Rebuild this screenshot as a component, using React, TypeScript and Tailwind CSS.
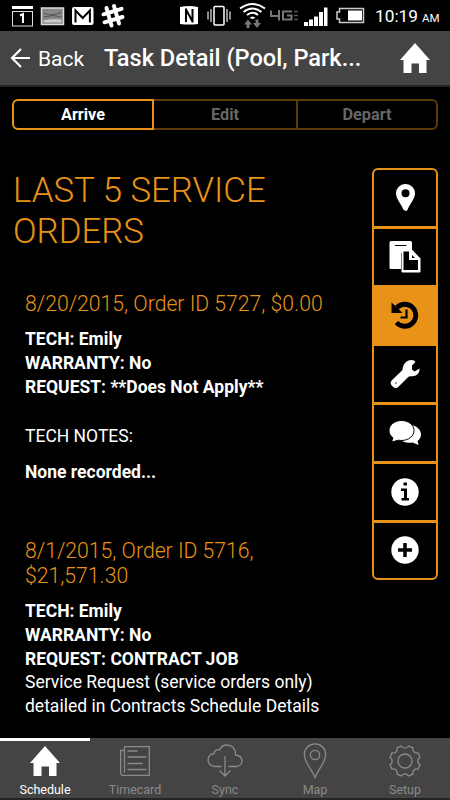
import type { ReactNode } from "react";

const HOUSE = "M15 0 30 17H26.5V30H19V20.5H11.5V30H3.5V17H0Z";

function HomeIcon() {
  return (
    <svg width="30" height="30" viewBox="0 0 30 30" fill="currentColor">
      <path d={HOUSE} />
    </svg>
  );
}

function StatusBar() {
  return (
    <div className="flex h-[31px] shrink-0 items-center bg-black text-white">
      <svg width="370" height="31" viewBox="0 0 370 31" fill="none" className="shrink-0">
        {/* calendar */}
        <path d="M12 7.500h21" stroke="#fff" strokeWidth="3" />
        <rect x="12.500" y="11.500" width="20" height="14.500" stroke="#ddd" />
        <path d="M20 15.500l3-1.500v9" stroke="#fff" strokeWidth="2" />
        {/* gallery */}
        <rect x="41.500" y="8" width="22" height="16.500" fill="#888" stroke="#ddd" strokeWidth="1.500" />
        <path d="M43.500 13q8 4 18-1M43.500 17q10-3 18 0" stroke="#555" />
        <path d="M43.500 20.500q8-2 18-1v3h-18z" fill="#ccc" />
        {/* mail */}
        <rect x="72" y="7" width="21.500" height="18" rx="2" fill="#fff" />
        <path d="M75.500 22.500V10.500l7.200 7.500 7.200-7.500v12" stroke="#000" strokeWidth="2" />
        {/* hash */}
        <path d="M106.500 8l5 17.500M114 6l5 17.500M103.500 14.300l18-5.500M104.500 22.300l18-5.300" stroke="#fff" strokeWidth="4" strokeLinecap="round" />
        {/* nfc */}
        <path d="M180 7q9-2 18 0v17q-9 1-18 0z" fill="#fff" />
        <path d="M186 22V8.500M186 9.500l6.500 12M192.500 22.500V9" stroke="#000" strokeWidth="2" />
        {/* vibrate */}
        <rect x="214" y="6.500" width="10" height="18.500" rx="1" stroke="#fff" strokeWidth="1.500" />
        <path d="M211 9v13M208 11.500v8M227 9v13M230 11.500v8" stroke="#bbb" strokeWidth="1.500" />
        {/* wifi */}
        <path d="M240 8.500q12.500-9 25 0M243.500 12q9-7 18 0M247 15q5.500-4.500 11 0" stroke="#fff" strokeWidth="2" />
        <path d="M249.500 18q3-3 6 0l-3 1z" fill="#fff" />
        <path d="M248 19.500l4 5h-2.500V28h-3v-3.500H244zM257 28l-4-5h2.500v-3.500h3V23h2.500z" fill="#777" />
        {/* network */}
        <path d="M271 10.500v5.500h8M279 10v10.500M292 11.500h-9v8h8.500v-4h-4.500" stroke="#777" strokeWidth="2" />
        <path d="M294 11.500h4M294 15.500h4M294 19.500h4" stroke="#555" strokeWidth="1.500" />
        {/* signal */}
        <path d="M304 22h4v4h-4zM309 19.500h4V26h-4zM314 16.500h4V26h-4zM319 12h4v14h-4zM324 7.500h3.500V26H324z" fill="#fff" />
        {/* battery */}
        <path d="M339.500 8.500h24v14h-24v-3.500h-2.500v-7h2.500z" stroke="#ccc" strokeWidth="1.500" />
        <path d="M348 10.500h14v10h-14z" fill="#fff" />
      </svg>
      <div className="flex items-baseline gap-1 pl-[5px] pt-[3px] text-[17.300px] leading-none">
        <span>10:19</span>
        <span className="text-[11.500px]">AM</span>
      </div>
    </div>
  );
}

function Header() {
  return (
    <header className="flex h-14 shrink-0 items-center border-b-2 border-[#242424] bg-[#444] pl-[10px] pr-5 text-white">
      <svg width="21" height="20" viewBox="0 0 21 20" fill="none" stroke="currentColor" strokeWidth="2.200">
        <path d="M11 1 2 10l9 9M2 10h18" />
      </svg>
      <span className="w-[66px] pl-[7px] pt-[3px] text-[21px]">Back</span>
      <h1 className="flex-1 whitespace-nowrap pl-[7px] pt-0.5 text-[23.600px] font-medium">Task Detail (Pool, Park...</h1>
      <HomeIcon />
    </header>
  );
}

const TABS = [
  { label: "Arrive", className: "rounded-l-md border-2 border-[#e89318] text-white" },
  { label: "Edit", className: "border-y-2 border-[#5d3a0a] text-[#666]" },
  { label: "Depart", className: "rounded-r-md border-2 border-[#5d3a0a] text-[#666]" },
];

function PinIcon() {
  return (
    <svg width="19" height="27" viewBox="0 0 19 27" fill="currentColor">
      <path fillRule="evenodd" d="M9.500 0A9.300 9.300 0 0 1 19 9.500c0 5-4.500 9.500-7.500 16.200-.7 1.600-3.200 1.600-4 0C4.500 19 0 14.500 0 9.500A9.300 9.300 0 0 1 9.500 0zm0 5.200a4 4 0 1 0 0 8 4 4 0 0 0 0-8z" />
    </svg>
  );
}

function PasteIcon() {
  return (
    <svg width="32" height="32" viewBox="0 0 32 32" fill="currentColor">
      <path d="M2 0h19.500a1.500 1.500 0 0 1 1.500 1.500V12H12v16H2a1.500 1.500 0 0 1-1.500-1.500v-25A1.500 1.500 0 0 1 2 0z" />
      <path d="M6 4.500h11.500" stroke="#000" strokeWidth="1.200" />
      <path d="M12.500 9h11l8 8.500v13a1 1 0 0 1-1 1h-17a1 1 0 0 1-1-1z" />
      <path d="M14.500 10.500h5.500V19h9v10h-14.500zM23 14l3 3h-3z" fill="#000" />
    </svg>
  );
}

function HistoryIcon() {
  return (
    <svg width="28" height="28" viewBox="0 0 28 28" fill="none" stroke="currentColor">
      <path d="M6 6.500a11 11 0 1 1-.5 15" strokeWidth="4.800" />
      <path d="M.5 1.500 4.500 5 11.500 12H.5z" fill="currentColor" stroke="none" />
      <path d="M15.500 8.500v8H9.500" strokeWidth="2.200" />
    </svg>
  );
}

function WrenchIcon() {
  return (
    <svg width="30" height="30" viewBox="0 0 30 30" fill="currentColor">
      <path d="M24 1.500 25.500 3 22 6.500v4L24.500 12.500 29.500 9.500C30 14.500 26 18 21 17.200c-1.200-.2-2 .1-2.800.8L8.500 27.700c-1.800 1.800-3.800 1.600-5.300.3l-1.500-1.500c-1.400-1.600-1.400-3.500 0-5L12.500 11C13 3.500 18.500-.5 24 1.500z" />
      <circle cx="6" cy="24" r=".7" fill="#000" />
    </svg>
  );
}

function ChatIcon() {
  return (
    <svg width="32" height="26" viewBox="0 0 32 26" fill="currentColor">
      <path d="M17 5c8-1 15 3.500 15 9.500 0 3-1.500 5-3.500 6.500l1 4-6-2.500c-5 1-10-.5-12-3z" />
      <path d="M12.500.5C19.500.5 25 5 25 10.500s-5.500 10-12.500 10c-1 0-2-.1-3-.3L2.500 22l1.500-4.200C1.500 16 0 13.500 0 10.500 0 5 5.500.5 12.500.5z" stroke="#000" />
    </svg>
  );
}

function InfoIcon() {
  return (
    <svg width="28" height="28" viewBox="0 0 28 28">
      <circle cx="14" cy="14" r="13.700" fill="currentColor" />
      <path d="M12.500 4.500H16v3h-3.500zM10 10.500h6v9.500h2v2.500h-7.500V20H13v-7h-3z" fill="#000" />
    </svg>
  );
}

function PlusIcon() {
  return (
    <svg width="28" height="28" viewBox="0 0 28 28">
      <circle cx="14" cy="14" r="13.700" fill="currentColor" />
      <path d="M14 7v14M7 14h14" stroke="#000" strokeWidth="3.500" />
    </svg>
  );
}

const TOOLS: { id: string; icon: ReactNode; active?: boolean }[] = [
  { id: "location", icon: <PinIcon /> },
  { id: "documents", icon: <PasteIcon /> },
  { id: "history", icon: <HistoryIcon />, active: true },
  { id: "tools", icon: <WrenchIcon /> },
  { id: "chat", icon: <ChatIcon /> },
  { id: "info", icon: <InfoIcon /> },
  { id: "add", icon: <PlusIcon /> },
];

interface Order {
  title: string;
  request: string;
  details?: string;
  notes?: string;
}

const ORDERS: Order[] = [
  { title: "8/20/2015, Order ID 5727, $0.00", request: "**Does Not Apply**", notes: "None recorded..." },
  {
    title: "8/1/2015, Order ID 5716, $21,571.30",
    request: "CONTRACT JOB",
    details: "Service Request (service orders only) detailed in Contracts Schedule Details",
  },
];

function OrderCard({ order }: { order: Order }) {
  return (
    <article className="pl-3">
      <h3 className="w-[300px] text-[21.200px] font-light leading-[25px] text-[#e89318]">{order.title}</h3>
      <div className="mt-3 text-[17.500px] leading-[23.800px]">
        <p className="font-bold">TECH: Emily</p>
        <p className="font-bold">WARRANTY: No</p>
        <p className="font-bold">REQUEST: {order.request}</p>
        {order.details && <p>{order.details}</p>}
        {order.notes && (
          <>
            <p className="mt-[26px]">TECH NOTES:</p>
            <p className="mt-3 font-bold">{order.notes}</p>
          </>
        )}
      </div>
    </article>
  );
}

// Eight-toothed outline around (16, 16); curves dip between neighbouring teeth
function gearPath() {
  const at = (deg: number, r: number) => {
    const a = (deg * Math.PI) / 180;
    return `${(16 + r * Math.cos(a)).toFixed(2)} ${(16 + r * Math.sin(a)).toFixed(2)}`;
  };
  let d = "";
  for (let i = 0; i < 8; i++) {
    const mid = 22.5 + i * 45;
    d += `${i === 0 ? "M" : "L"}${at(mid - 9, 15.4)}L${at(mid + 9, 15.4)}`;
    d += `C${at(mid + 14, 12.2)} ${at(mid + 31, 12.2)} ${at(mid + 36, 15.4)}`;
  }
  return d + "Z";
}

const NAV: { label: string; icon: ReactNode }[] = [
  { label: "Schedule", icon: <HomeIcon /> },
  {
    label: "Timecard",
    icon: (
      <svg width="30" height="30" viewBox="0 0 30 30" fill="none" stroke="currentColor" strokeWidth="1.300">
        <path d="M4.500.7h24.800v28.600H3c-1.500 0-2.300-1-2.300-2.500V4.500h3M4.500.7v26M7.500 5h10M7.500 11h19M7.500 17.500h15M7.500 23.500h19" />
      </svg>
    ),
  },
  {
    label: "Sync",
    icon: (
      <svg width="36" height="34" viewBox="0 0 36 34" fill="none" stroke="currentColor" strokeWidth="1.300">
        <path d="M14.500 22.500H8C4 22.500 1 19.500 1 16c0-4 3-6.500 6-6.500C7.500 6 10.500 5 12.500 6 14 2.500 17 1 20 1c5 0 8.500 4 8.500 8.500v1.500c4 .5 6.500 3 6.500 6 0 3-2.500 5.500-6 5.500h-7.500M18 12v20M12.500 26.500 18 32l5.500-5.500" />
      </svg>
    ),
  },
  {
    label: "Map",
    icon: (
      <svg width="24" height="36" viewBox="0 0 24 36" fill="none" stroke="currentColor" strokeWidth="1.300">
        <path d="M12 34.500C9 27 1.300 19 1.300 11.500a10.700 10.700 0 0 1 21.400 0C22.700 19 15 27 12 34.500z" />
        <circle cx="12" cy="12" r="4.700" />
      </svg>
    ),
  },
  {
    label: "Setup",
    icon: (
      <svg width="32" height="32" viewBox="0 0 32 32" fill="none" stroke="currentColor" strokeWidth="1.300">
        <path d={gearPath()} strokeLinejoin="round" />
        <circle cx="16" cy="16" r="7" />
      </svg>
    ),
  },
];

export default function App() {
  return (
    <div className="flex h-[800px] w-[450px] flex-col overflow-hidden bg-black font-['Roboto',sans-serif] text-white">
      <StatusBar />
      <Header />
      <div className="mx-3 mt-3 grid h-[31px] shrink-0 grid-cols-3 text-[16.300px] font-bold">
        {TABS.map((tab) => (
          <button key={tab.label} className={`flex items-center justify-center pt-0.5 ${tab.className}`}>
            {tab.label}
          </button>
        ))}
      </div>
      <main className="flex min-h-0 flex-1 items-start pt-[38px] pl-[13px] pr-3">
        <section className="w-[335px] pt-0.5">
          <h2 className="text-[34.800px] font-light leading-[41px] text-[#e89318]">LAST 5 SERVICE ORDERS</h2>
          <div className="mt-[39px] flex flex-col gap-[53px]">
            {ORDERS.map((order) => (
              <OrderCard key={order.title} order={order} />
            ))}
          </div>
        </section>
        <nav className="ml-auto flex h-[412px] w-[66px] flex-col overflow-hidden rounded-md border-2 border-[#e89318]">
          {TOOLS.map((tool) => (
            <button
              key={tool.id}
              aria-label={tool.id}
              className={`flex h-[58.800px] shrink-0 items-center justify-center border-b-[3px] border-[#e89318] last:h-auto last:flex-1 last:border-b-0 ${
                tool.active ? "bg-[#e89318] text-black" : "text-white"
              }`}
            >
              {tool.icon}
            </button>
          ))}
        </nav>
      </main>
      <footer className="grid h-[62px] shrink-0 grid-cols-5 border-b-2 border-[#242424] bg-[#444] text-[12.500px] text-[#8a8a8a]">
        {NAV.map((item, i) => (
          <button
            key={item.label}
            className={`flex flex-col items-center border-t-[3px] ${i === 0 ? "border-white text-white" : "border-[#444]"}`}
          >
            <span className="flex h-10 items-center">{item.icon}</span>
            <span className="leading-[18px]">{item.label}</span>
          </button>
        ))}
      </footer>
    </div>
  );
}
